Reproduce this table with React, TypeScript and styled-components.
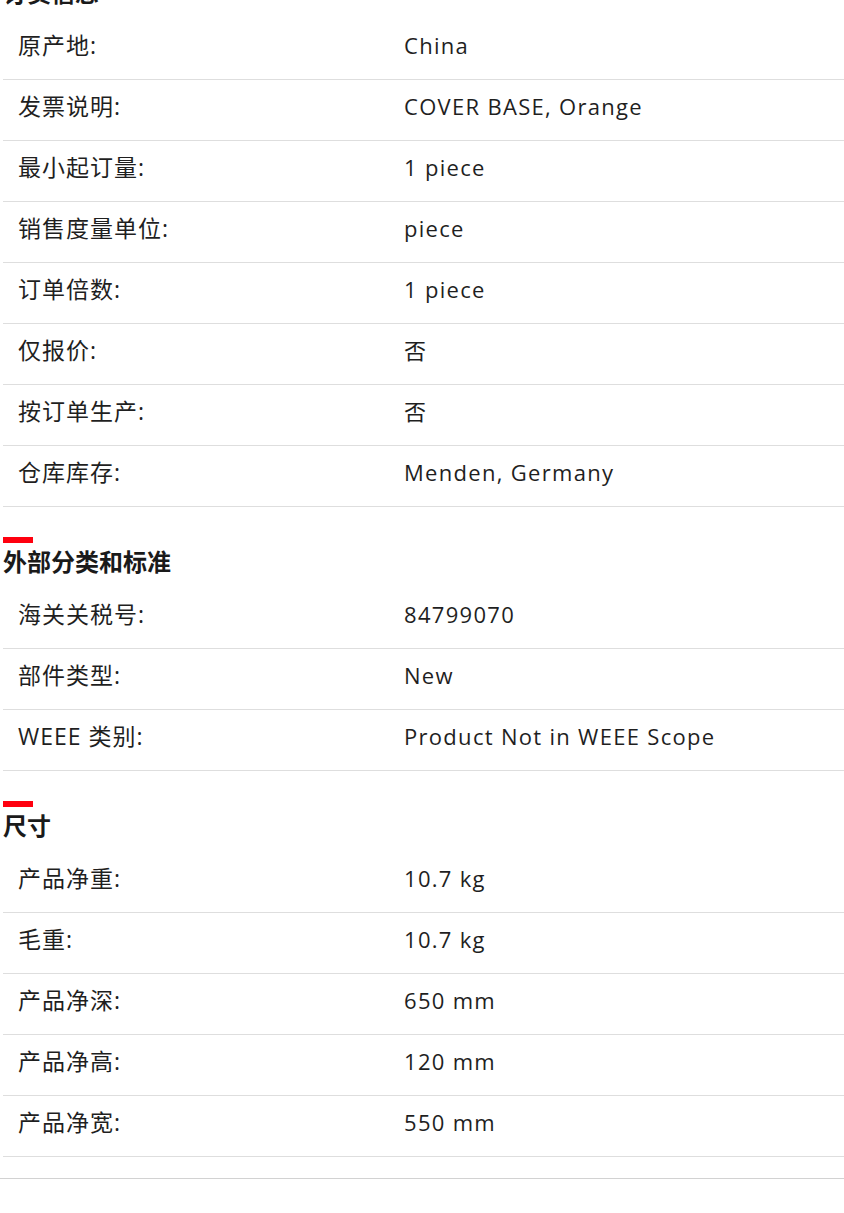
import React from 'react';
import styled, { createGlobalStyle } from 'styled-components';

const GlobalStyle = createGlobalStyle`
  html, body {
    margin: 0;
    padding: 0;
    background: #ffffff;
    overflow: hidden;
  }
  body {
    font-family: "Open Sans", "Noto Sans CJK SC", sans-serif;
    color: #1f1f1f;
  }
`;

// page is scrolled a little, so the first heading is cut at the top
const Page = styled.div`
  margin-top: -32px;
  padding-left: 3px;
`;

const Section = styled.section`
  & + & {
    margin-top: 30px;
  }
`;

const RedBar = styled.div`
  width: 30px;
  height: 6px;
  background: #ff000f;
`;

const Heading = styled.h2`
  margin: 0 0 9px 0;
  font-size: 24px;
  line-height: 36px;
  font-weight: 700;
  font-family: "Noto Sans CJK SC", sans-serif;
  color: #1a1a1a;
`;

const Table = styled.div`
  display: flex;
  flex-direction: column;
`;

const Row = styled.div`
  display: grid;
  grid-template-columns: 386px 1fr;
  height: 60px;
  align-items: center;
  border-bottom: 1px solid #dedede;
`;

const Cell = styled.div<{ $label?: boolean }>`
  padding: 0 15px;
  font-size: ${(p) => (p.$label ? '23px' : '22px')};
  letter-spacing: ${(p) => (p.$label ? '1px' : '1.3px')};
  line-height: 30px;
  margin-top: -9px;
  white-space: nowrap;
`;

const Footer = styled.div`
  margin-top: 21px;
  margin-left: -3px;
  border-top: 1px solid #d2d2d2;
`;

type Item = [string, string];

const sections: { title: string; rows: Item[] }[] = [
  {
    title: '订货信息',
    rows: [
      ['原产地:', 'China'],
      ['发票说明:', 'COVER BASE, Orange'],
      ['最小起订量:', '1 piece'],
      ['销售度量单位:', 'piece'],
      ['订单倍数:', '1 piece'],
      ['仅报价:', '否'],
      ['按订单生产:', '否'],
      ['仓库库存:', 'Menden, Germany'],
    ],
  },
  {
    title: '外部分类和标准',
    rows: [
      ['海关关税号:', '84799070'],
      ['部件类型:', 'New'],
      ['WEEE 类别:', 'Product Not in WEEE Scope'],
    ],
  },
  {
    title: '尺寸',
    rows: [
      ['产品净重:', '10.7 kg'],
      ['毛重:', '10.7 kg'],
      ['产品净深:', '650 mm'],
      ['产品净高:', '120 mm'],
      ['产品净宽:', '550 mm'],
    ],
  },
];

export default function App() {
  return (
    <>
      <GlobalStyle />
      <Page>
        {sections.map((s) => (
          <Section key={s.title}>
            <RedBar />
            <Heading>{s.title}</Heading>
            <Table>
              {s.rows.map(([label, value]) => (
                <Row key={label}>
                  <Cell $label>{label}</Cell>
                  <Cell>{value}</Cell>
                </Row>
              ))}
            </Table>
          </Section>
        ))}
        <Footer />
      </Page>
    </>
  );
}
